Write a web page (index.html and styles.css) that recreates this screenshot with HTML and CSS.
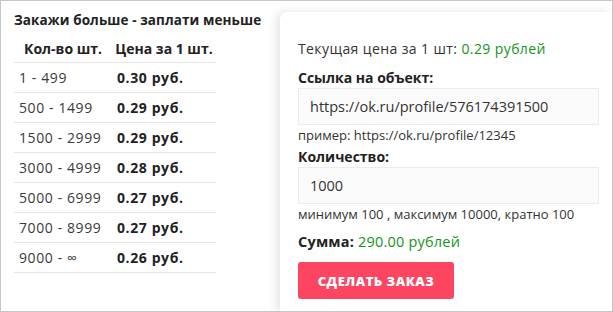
FILE: index.html
```html
<!DOCTYPE html>
<html lang="ru">

<head>
    <meta charset="UTF-8">
    <title>Заказ</title>
    <link rel="stylesheet" href="styles.css">
</head>

<body>
    <div class="frame">
        <div class="prices">
            <h3 class="prices-title">Закажи больше - заплати меньше</h3>
            <table class="price-table">
                <tr>
                    <th>Кол-во шт.</th>
                    <th>Цена за 1 шт.</th>
                </tr>
                <tr><td>1 - 499</td><td class="cost">0.30 руб.</td></tr>
                <tr><td>500 - 1499</td><td class="cost">0.29 руб.</td></tr>
                <tr><td>1500 - 2999</td><td class="cost">0.29 руб.</td></tr>
                <tr><td>3000 - 4999</td><td class="cost">0.28 руб.</td></tr>
                <tr><td>5000 - 6999</td><td class="cost">0.27 руб.</td></tr>
                <tr><td>7000 - 8999</td><td class="cost">0.27 руб.</td></tr>
                <tr><td>9000 - ∞</td><td class="cost">0.26 руб.</td></tr>
            </table>
        </div>

        <form class="order">
            <p class="current">Текущая цена за 1 шт: <span class="green">0.29 рублей</span></p>

            <label class="label">Ссылка на объект:</label>
            <input class="field" type="text" value="https://ok.ru/profile/576174391500">
            <p class="hint">пример: https://ok.ru/profile/12345</p>

            <label class="label label-tight">Количество:</label>
            <input class="field" type="text" value="1000">
            <p class="hint">минимум 100 , максимум 10000, кратно 100</p>

            <p class="sum"><b>Сумма:</b> <span class="green">290.00 рублей</span></p>

            <button class="submit" type="button">Сделать заказ</button>
        </form>
    </div>
</body>

</html>
```

FILE: styles.css
```css
* {
    margin: 0;
    padding: 0;
    box-sizing: border-box;
}

body {
    font-family: "Open Sans", "Liberation Sans", sans-serif;
    color: #333;
    background: #fff;
}

.frame {
    width: 613px;
    height: 312px;
    border: 1px solid #c6c6c6;
    display: flex;
    overflow: hidden;
}

.prices {
    width: 279px;
    flex-shrink: 0;
    padding: 10px 0 0 13px;
}

.prices-title {
    font-size: 13.5px;
    line-height: 18px;
    font-weight: 700;
    color: #222;
    letter-spacing: 0.1px;
}

.price-table {
    width: 202px;
    border-collapse: collapse;
    margin-top: 4px;
    font-size: 14px;
}

.price-table th {
    font-weight: 700;
    color: #222;
    height: 29px;
    border-bottom: 1px solid #e6e6e6;
    padding-top: 2px;
    white-space: nowrap;
}

.price-table th:first-child {
    width: 98px;
}

.price-table td {
    height: 30px;
    border-bottom: 1px solid #e6e6e6;
    padding: 1px 0 0 5px;
    color: #3a3a3a;
    letter-spacing: 0.6px;
    white-space: nowrap;
}

.price-table .cost {
    font-weight: 700;
    color: #222;
}

.order {
    flex: 1;
    margin-top: 11px;
    background: #fff;
    border-radius: 7px 0 0 0;
    box-shadow: -4px 0 10px rgba(0, 0, 0, 0.1);
    padding: 28px 12px 0 18px;
    display: flex;
    flex-direction: column;
    align-items: flex-start;
}

.current {
    font-size: 14px;
    line-height: 18px;
    letter-spacing: 0.4px;
    color: #333;
}

.green {
    color: #149419;
}

.label {
    font-size: 14px;
    line-height: 18px;
    font-weight: 700;
    color: #222;
    margin-top: 11px;
}

.label-tight {
    margin-top: 4px;
}

.field {
    width: 301px;
    height: 37px;
    margin-top: 1px;
    border: 1px solid #ebebeb;
    background: #fcfbfb;
    font-family: inherit;
    font-size: 14.5px;
    color: #333;
    padding: 0 11px;
    outline: none;
}

.hint {
    font-size: 13px;
    line-height: 17px;
    color: #333;
    margin-top: 2px;
}

.sum {
    font-size: 14.5px;
    line-height: 18px;
    letter-spacing: 0.2px;
    margin-top: 10px;
}

.sum b {
    color: #222;
}

.submit {
    margin-top: 11px;
    width: 156px;
    height: 37px;
    border: none;
    border-radius: 3px;
    background: #fd4461;
    color: #fff;
    font-family: inherit;
    font-size: 13px;
    font-weight: 800;
    text-transform: uppercase;
    letter-spacing: 0.5px;
}
```
